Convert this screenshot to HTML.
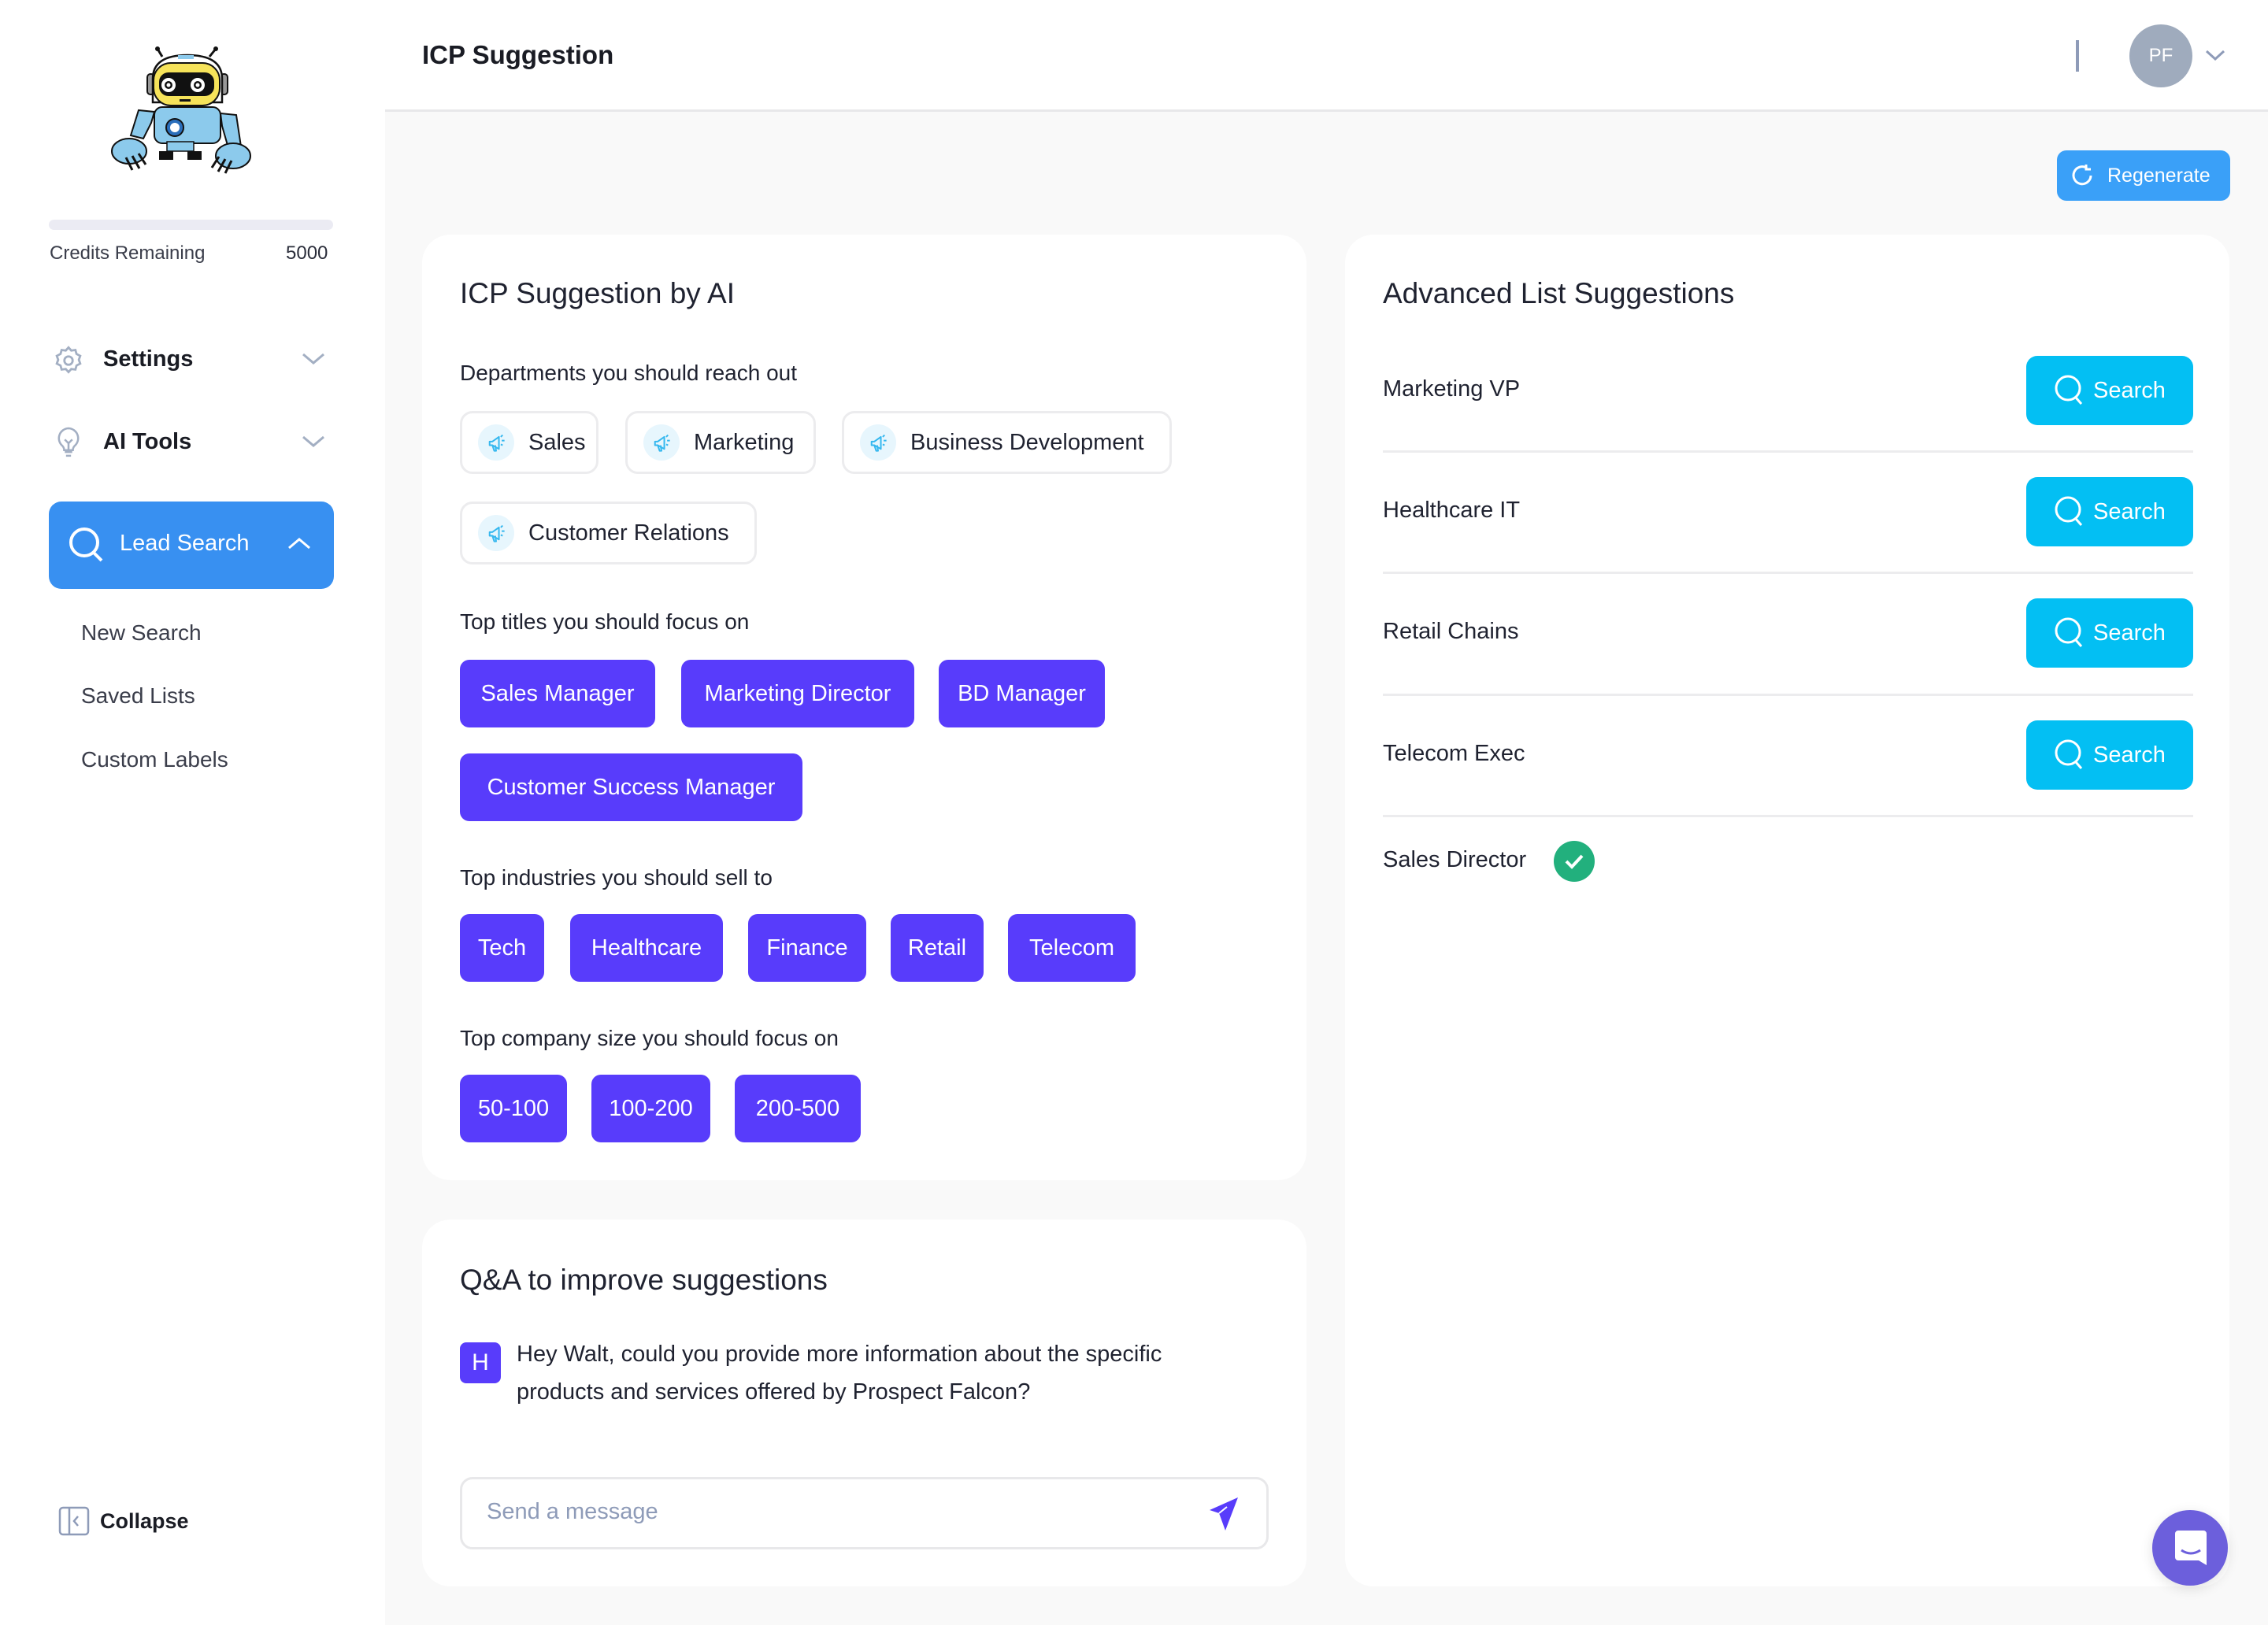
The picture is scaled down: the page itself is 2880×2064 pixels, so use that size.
<!DOCTYPE html>
<html><head><meta charset="utf-8"><style>
*{margin:0;padding:0;box-sizing:border-box}
body{width:2880px;height:2064px;background:#f9f9f9;font-family:"Liberation Sans",sans-serif;color:#1f2230;position:relative;overflow:hidden}
.abs{position:absolute}
.side{left:0;top:0;width:489px;height:2064px;background:#fff}
.hdr{left:489px;top:0;width:2391px;height:142px;background:#fff;border-bottom:3px solid #e8e8ea}
.card{background:#fff;border-radius:36px}
.t{position:absolute;white-space:nowrap}
.dchip{position:absolute;height:80px;border:3px solid #ececee;border-radius:16px;background:#fff;font-size:29px;color:#1f2230;display:flex;align-items:center}
.dchip .ic{width:46px;height:46px;border-radius:50%;background:#e7f6fd;margin-left:20px;margin-right:18px;display:flex;align-items:center;justify-content:center}
.pchip{position:absolute;background:#583cfb;color:#fff;border-radius:12px;font-size:29px;display:flex;align-items:center;justify-content:center}
.sbtn{position:absolute;left:2573px;width:212px;height:88px;background:#03bff3;border-radius:14px;color:#fff;font-size:29px;display:flex;align-items:center;justify-content:center}
.sbtn svg{margin-right:10px}
.div{position:absolute;left:1756px;width:1029px;height:3px;background:#ececee}
.row{position:absolute;left:1756px;font-size:29px;color:#1f2230}
.lbl{position:absolute;left:584px;font-size:28px;color:#1f2230}
</style></head><body>
<div class="abs side"></div>
<div class="abs hdr"></div>

<!-- robot -->
<svg class="abs" style="left:130px;top:40px" width="200" height="200" viewBox="0 0 200 200">
 <line x1="76" y1="32" x2="70" y2="22" stroke="#111" stroke-width="3"/><circle cx="70" cy="22" r="3" fill="#111"/>
 <line x1="136" y1="32" x2="144" y2="22" stroke="#111" stroke-width="3"/><circle cx="144" cy="22" r="3" fill="#111"/>
 <rect x="57" y="54" width="9" height="26" rx="4" fill="#999" stroke="#111" stroke-width="2"/><rect x="150" y="54" width="9" height="26" rx="4" fill="#999" stroke="#111" stroke-width="2"/>
 <path d="M64 90 L64 60 Q64 30 108 30 Q152 30 152 60 L152 90 Z" fill="#fff" stroke="#111" stroke-width="2.5"/>
 <rect x="96" y="30" width="20" height="5" fill="#8ccaec"/>
 <rect x="65" y="40" width="84" height="54" rx="22" fill="#f6e35a" stroke="#111" stroke-width="2"/>
 <rect x="72" y="52" width="70" height="30" rx="12" fill="#111"/>
 <circle cx="84" cy="68" r="9" fill="#fff"/><circle cx="84" cy="68" r="5" fill="#111"/><circle cx="84" cy="68" r="2.5" fill="#fff"/>
 <circle cx="121" cy="68" r="9" fill="#fff"/><circle cx="121" cy="68" r="5" fill="#111"/><circle cx="121" cy="68" r="2.5" fill="#fff"/>
 <rect x="98" y="86" width="14" height="3" fill="#111"/>
 <rect x="66" y="96" width="84" height="46" rx="10" fill="#8ccaec" stroke="#111" stroke-width="2"/>
 <circle cx="92" cy="122" r="11" fill="#2a6ebb" stroke="#111" stroke-width="2"/><circle cx="92" cy="122" r="6" fill="#fff"/>
 <path d="M66 102 L46 100 L36 132 L52 136 L62 116 Z" fill="#8ccaec" stroke="#111" stroke-width="2"/>
 <path d="M150 104 L170 106 L176 146 L160 148 L152 120 Z" fill="#8ccaec" stroke="#111" stroke-width="2"/>
 <ellipse cx="34" cy="152" rx="22" ry="16" fill="#8ccaec" stroke="#111" stroke-width="2"/>
 <ellipse cx="166" cy="158" rx="22" ry="16" fill="#8ccaec" stroke="#111" stroke-width="2"/>
 <path d="M30 160 l8 16 M38 158 l9 16 M46 155 l9 14" stroke="#111" stroke-width="3"/>
 <path d="M164 164 l-8 16 M156 162 l-9 16 M148 159 l-9 14" stroke="#111" stroke-width="3"/>
 <rect x="72" y="152" width="18" height="11" fill="#111"/><rect x="108" y="152" width="18" height="11" fill="#111"/>
 <rect x="82" y="140" width="34" height="12" fill="#8ccaec" stroke="#111" stroke-width="1.5"/>
</svg>

<div class="abs" style="left:62px;top:279px;width:361px;height:13px;border-radius:7px;background:#ebebf3"></div>
<div class="t" style="left:63px;top:308px;font-size:24px;color:#3a3d4a">Credits Remaining</div>
<div class="t" style="left:363px;top:308px;font-size:24px;color:#2a2d3a">5000</div>

<svg class="abs" style="left:66px;top:437px" width="42" height="42" viewBox="0 0 24 24" fill="none" stroke="#a3afc3" stroke-width="1.6"><circle cx="12" cy="12" r="3"/><path d="M12 2.5l2 2.2 3-.4.8 2.9 2.7 1.4-1 2.8 1 2.8-2.7 1.4-.8 2.9-3-.4-2 2.2-2-2.2-3 .4-.8-2.9-2.7-1.4 1-2.8-1-2.8 2.7-1.4.8-2.9 3 .4z"/></svg>
<div class="t" style="left:131px;top:440px;font-size:29px;font-weight:bold;color:#1a1c24">Settings</div>
<svg class="abs" style="left:382px;top:446px" width="32" height="20" viewBox="0 0 32 20" fill="none" stroke="#a3afc3" stroke-width="3"><path d="M3 4l13 11 13-11"/></svg>

<svg class="abs" style="left:68px;top:540px" width="38" height="46" viewBox="0 0 24 28" fill="none" stroke="#a3afc3" stroke-width="1.6"><path d="M12 2a8 8 0 0 0-5 14c1 1 1.5 2 1.5 3.5h7c0-1.5.5-2.5 1.5-3.5A8 8 0 0 0 12 2z"/><path d="M9 21h6M10 24h4M9 11l3 3 3-3M12 14v5"/></svg>
<div class="t" style="left:131px;top:545px;font-size:29px;font-weight:bold;color:#1a1c24">AI Tools</div>
<svg class="abs" style="left:382px;top:551px" width="32" height="20" viewBox="0 0 32 20" fill="none" stroke="#a3afc3" stroke-width="3"><path d="M3 4l13 11 13-11"/></svg>

<div class="abs" style="left:62px;top:637px;width:362px;height:111px;border-radius:16px;background:#3890f1"></div>
<svg class="abs" style="left:87px;top:668px" width="46" height="48" viewBox="0 0 46 48" fill="none" stroke="#fff" stroke-width="4"><circle cx="20" cy="21" r="17"/><path d="M32 34l10 10"/></svg>
<div class="t" style="left:152px;top:674px;font-size:29px;color:#fff">Lead Search</div>
<svg class="abs" style="left:364px;top:680px" width="32" height="20" viewBox="0 0 32 20" fill="none" stroke="#fff" stroke-width="3"><path d="M3 16l13-11 13 11"/></svg>

<div class="t" style="left:103px;top:788px;font-size:28px;color:#3a3d4a">New Search</div>
<div class="t" style="left:103px;top:868px;font-size:28px;color:#3a3d4a">Saved Lists</div>
<div class="t" style="left:103px;top:949px;font-size:28px;color:#3a3d4a">Custom Labels</div>

<svg class="abs" style="left:74px;top:1913px" width="40" height="38" viewBox="0 0 40 38" fill="none" stroke="#8e9bb8" stroke-width="2.5"><rect x="2" y="2" width="36" height="34" rx="4"/><path d="M14 2v34M25 13l-5 6 5 6"/></svg>
<div class="t" style="left:127px;top:1917px;font-size:27px;font-weight:bold;color:#1a1c24">Collapse</div>

<!-- header -->
<div class="t" style="left:536px;top:51px;font-size:33px;font-weight:bold;color:#1a1c24">ICP Suggestion</div>
<div class="abs" style="left:2636px;top:51px;width:4px;height:40px;background:#8e9bb8"></div>
<div class="abs" style="left:2704px;top:31px;width:80px;height:80px;border-radius:50%;background:#9fabbd;color:#fff;font-size:24px;display:flex;align-items:center;justify-content:center">PF</div>
<svg class="abs" style="left:2800px;top:62px" width="26" height="16" viewBox="0 0 26 16" fill="none" stroke="#8e9bb8" stroke-width="3"><path d="M2 3l11 10 11-10"/></svg>

<div class="abs" style="left:2612px;top:191px;width:220px;height:64px;border-radius:12px;background:#3aa0f8;color:#fff;font-size:25px;display:flex;align-items:center"><svg style="margin-left:16px;margin-right:16px" width="32" height="32" viewBox="0 0 32 32" fill="none" stroke="#fff" stroke-width="3"><path d="M27 16A11 11 0 1 1 22 6.5"/><path d="M21 2v6h6"/></svg>Regenerate</div>

<!-- left card -->
<div class="abs card" style="left:536px;top:298px;width:1123px;height:1201px"></div>
<div class="t" style="left:584px;top:352px;font-size:37px;color:#1f2230">ICP Suggestion by AI</div>
<div class="lbl" style="top:458px">Departments you should reach out</div>

<svg width="0" height="0" style="position:absolute"><defs><g id="mg" fill="none" stroke="#36b8ef" stroke-width="1.7" stroke-linejoin="round"><path d="M4 10h3l7-5v13l-7-4H4z"/><path d="M7 14l2 6h2l-1-6"/><path d="M16 5l2-2M17 9h3M16 13l2 1"/></g></defs></svg>

<div class="dchip" style="left:584px;top:522px;width:176px"><span class="ic"><svg width="26" height="26" viewBox="0 0 22 22"><use href="#mg"/></svg></span>Sales</div>
<div class="dchip" style="left:794px;top:522px;width:242px"><span class="ic"><svg width="26" height="26" viewBox="0 0 22 22"><use href="#mg"/></svg></span>Marketing</div>
<div class="dchip" style="left:1069px;top:522px;width:419px"><span class="ic"><svg width="26" height="26" viewBox="0 0 22 22"><use href="#mg"/></svg></span>Business Development</div>
<div class="dchip" style="left:584px;top:637px;width:377px"><span class="ic"><svg width="26" height="26" viewBox="0 0 22 22"><use href="#mg"/></svg></span>Customer Relations</div>

<div class="lbl" style="top:774px">Top titles you should focus on</div>
<div class="pchip" style="left:584px;top:838px;width:248px;height:86px">Sales Manager</div>
<div class="pchip" style="left:865px;top:838px;width:296px;height:86px">Marketing Director</div>
<div class="pchip" style="left:1192px;top:838px;width:211px;height:86px">BD Manager</div>
<div class="pchip" style="left:584px;top:957px;width:435px;height:86px">Customer Success Manager</div>

<div class="lbl" style="top:1099px">Top industries you should sell to</div>
<div class="pchip" style="left:584px;top:1161px;width:107px;height:86px">Tech</div>
<div class="pchip" style="left:724px;top:1161px;width:194px;height:86px">Healthcare</div>
<div class="pchip" style="left:950px;top:1161px;width:150px;height:86px">Finance</div>
<div class="pchip" style="left:1131px;top:1161px;width:118px;height:86px">Retail</div>
<div class="pchip" style="left:1280px;top:1161px;width:162px;height:86px">Telecom</div>

<div class="lbl" style="top:1303px">Top company size you should focus on</div>
<div class="pchip" style="left:584px;top:1365px;width:136px;height:86px">50-100</div>
<div class="pchip" style="left:751px;top:1365px;width:151px;height:86px">100-200</div>
<div class="pchip" style="left:933px;top:1365px;width:160px;height:86px">200-500</div>

<!-- QA card -->
<div class="abs card" style="left:536px;top:1549px;width:1123px;height:466px"></div>
<div class="t" style="left:584px;top:1605px;font-size:37px;color:#1f2230">Q&amp;A to improve suggestions</div>
<div class="abs" style="left:584px;top:1705px;width:52px;height:52px;border-radius:8px;background:#583cfb;color:#fff;font-size:30px;display:flex;align-items:center;justify-content:center">H</div>
<div class="t" style="left:656px;top:1696px;font-size:29px;line-height:48px;color:#1f2230">Hey Walt, could you provide more information about the specific<br>products and services offered by Prospect Falcon?</div>
<div class="abs" style="left:584px;top:1876px;width:1027px;height:92px;border:3px solid #e8e8ea;border-radius:16px;background:#fff"></div>
<div class="t" style="left:618px;top:1904px;font-size:29px;color:#8e9bb8">Send a message</div>
<svg class="abs" style="left:1532px;top:1900px" width="44" height="46" viewBox="0 0 44 46"><path d="M40 2L4 18l12 4 8 22z" fill="#583cfb"/><path d="M16 22l10-8" stroke="#fff" stroke-width="2"/></svg>

<!-- right card -->
<div class="abs card" style="left:1708px;top:298px;width:1123px;height:1717px"></div>
<div class="t" style="left:1756px;top:352px;font-size:37px;color:#1f2230">Advanced List Suggestions</div>

<div class="row" style="top:478px">Marketing VP</div>
<div class="sbtn" style="top:452px"><svg width="40" height="42" viewBox="0 0 40 42" fill="none" stroke="#fff" stroke-width="3"><circle cx="18" cy="18" r="15"/><path d="M28 30l7 8"/></svg>Search</div>
<div class="div" style="top:572px"></div>
<div class="row" style="top:632px">Healthcare IT</div>
<div class="sbtn" style="top:606px"><svg width="40" height="42" viewBox="0 0 40 42" fill="none" stroke="#fff" stroke-width="3"><circle cx="18" cy="18" r="15"/><path d="M28 30l7 8"/></svg>Search</div>
<div class="div" style="top:726px"></div>
<div class="row" style="top:786px">Retail Chains</div>
<div class="sbtn" style="top:760px"><svg width="40" height="42" viewBox="0 0 40 42" fill="none" stroke="#fff" stroke-width="3"><circle cx="18" cy="18" r="15"/><path d="M28 30l7 8"/></svg>Search</div>
<div class="div" style="top:881px"></div>
<div class="row" style="top:941px">Telecom Exec</div>
<div class="sbtn" style="top:915px"><svg width="40" height="42" viewBox="0 0 40 42" fill="none" stroke="#fff" stroke-width="3"><circle cx="18" cy="18" r="15"/><path d="M28 30l7 8"/></svg>Search</div>
<div class="div" style="top:1035px"></div>
<div class="row" style="top:1076px">Sales Director</div>
<div class="abs" style="left:1973px;top:1068px;width:52px;height:52px;border-radius:50%;background:#22b07d"></div>
<svg class="abs" style="left:1985px;top:1082px" width="28" height="24" viewBox="0 0 28 24" fill="none" stroke="#fff" stroke-width="4"><path d="M4 12l7 7 13-14"/></svg>

<!-- chat bubble -->
<div class="abs" style="left:2733px;top:1918px;width:96px;height:96px;border-radius:50%;background:#6c5fdc;box-shadow:0 4px 16px rgba(0,0,0,.12)"></div>
<svg class="abs" style="left:2760px;top:1942px" width="44" height="48" viewBox="0 0 44 48"><path d="M6 2h32a4 4 0 0 1 4 4v40l-10-6H6a4 4 0 0 1-4-4V6a4 4 0 0 1 4-4z" fill="#fff"/><path d="M10 27q12 8 24 0" fill="none" stroke="#6c5fdc" stroke-width="3"/></svg>
</body></html>
